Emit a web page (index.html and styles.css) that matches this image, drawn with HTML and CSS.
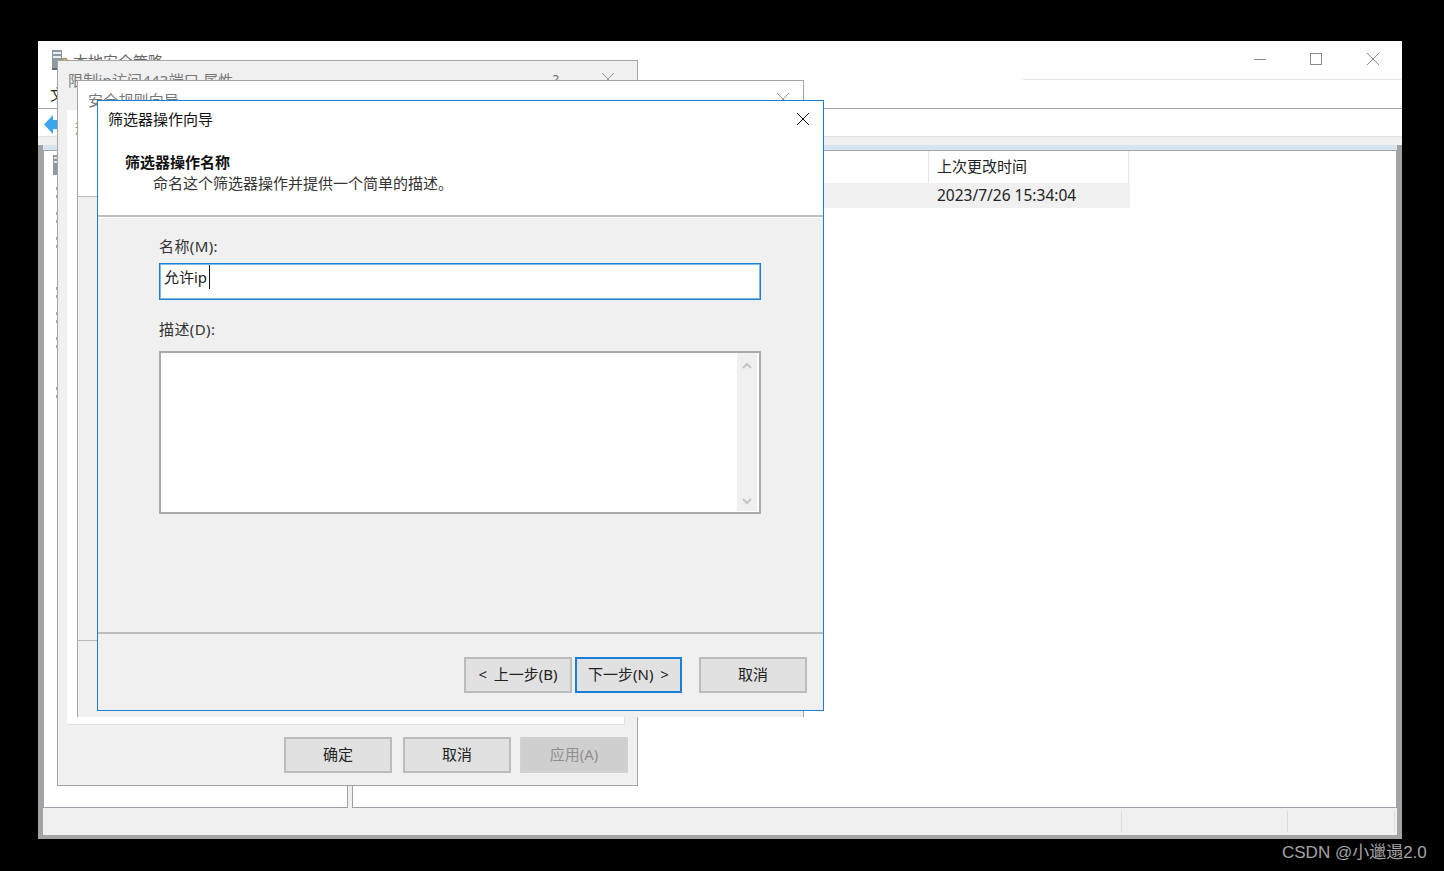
FILE: index.html
```html
<!doctype html>
<html lang="zh-CN">
  <head>
    <meta charset="UTF-8" />
    <meta name="viewport" content="width=device-width, initial-scale=1.0" />
    <title>筛选器操作向导</title>
    <link rel="stylesheet" href="styles.css">
  </head>
  <body>
    <div class="desktop">
      <!-- 主窗口 -->
      <div class="window main-window">
        <div class="title-bar">
          <svg class="app-icon" width="18" height="20" viewBox="0 0 18 20">
            <rect x="1" y="0" width="10" height="18" fill="#8d99a3" />
            <rect x="2" y="2" width="8" height="2" fill="#e8edf0" />
            <rect x="2" y="6" width="8" height="2" fill="#e8edf0" />
            <rect x="1" y="18" width="10" height="2" fill="#5f6a73" />
            <path d="M11 14v-3a2.500 2.500 0 0 1 5 0v3" fill="none" stroke="#b08a3a" stroke-width="1.500" />
            <rect x="10" y="14" width="7" height="5" fill="#d9a93f" />
          </svg>
          <span class="app-name">本地安全策略</span>
          <div class="window-controls">
            <svg class="min-icon" width="12" height="12" viewBox="0 0 12 12"><path d="M0 6.500h12" stroke="#8a8a8a" /></svg>
            <svg width="12" height="12" viewBox="0 0 12 12"><rect x="0.500" y="0.500" width="11" height="11" fill="none" stroke="#8a8a8a" /></svg>
            <svg width="12" height="12" viewBox="0 0 12 12"><path d="M0 0l12 12M12 0L0 12" stroke="#8a8a8a" /></svg>
          </div>
        </div>
        <div class="title-rule"></div>
        <div class="menu-bar">文件(F)</div>
        <div class="tool-bar">
          <svg width="15" height="19" viewBox="0 0 15 19">
            <path d="M0 9.500L9 0v5h6v9H9v5z" fill="#3ba6f0" />
          </svg>
        </div>
        <div class="strip"></div>
        <div class="workspace">
          <div class="blue-strip"></div>
          <div class="panes">
            <div class="pane tree-pane">
              <svg class="tree-icon" width="14" height="21" viewBox="0 0 14 21">
                <rect x="0" y="0" width="13" height="20" fill="#8d99a3" />
                <rect x="1" y="2" width="11" height="2" fill="#dfe5e9" />
                <rect x="1" y="6" width="11" height="2" fill="#dfe5e9" />
              </svg>
              <div class="tree-row"><i></i></div>
              <div class="tree-row"><i></i></div>
              <div class="tree-row"><i></i></div>
              <div class="tree-row"></div>
              <div class="tree-row"><i></i></div>
              <div class="tree-row"><i></i></div>
              <div class="tree-row"><i></i></div>
              <div class="tree-row"></div>
              <div class="tree-row"><i></i></div>
            </div>
            <div class="pane list-pane">
              <div class="list-head">
                <div class="col-name"></div>
                <div class="col-time">上次更改时间</div>
              </div>
              <div class="list-row">
                <div class="col-name"></div>
                <div class="col-time">2023/7/26 15:34:04</div>
              </div>
            </div>
          </div>
          <div class="status-bar">
            <div class="status-cell status-wide"></div>
            <div class="status-cell status-mid"></div>
            <div class="status-cell status-end"></div>
          </div>
        </div>
      </div>

      <!-- 属性对话框 -->
      <div class="window dialog-props">
        <div class="dialog-title">
          <span>限制ip访问443端口 属性</span>
          <span class="help-mark">?</span>
          <svg class="dim-close" width="12" height="12" viewBox="0 0 12 12"><path d="M0 0l12 12M12 0L0 12" stroke="#999" /></svg>
        </div>
        <div class="tab-panel">
          <span class="tab-text">规则</span>
        </div>
        <div class="button-row props-buttons">
          <button class="btn btn-ok">确定</button>
          <button class="btn">取消</button>
          <button class="btn btn-disabled">应用(A)</button>
        </div>
      </div>

      <!-- 安全规则向导 -->
      <div class="window dialog-rule">
        <div class="rule-head">
          <div class="dialog-title">
            <span>安全规则向导</span>
            <svg class="dim-close" width="12" height="12" viewBox="0 0 12 12"><path d="M0 0l12 12M12 0L0 12" stroke="#999" /></svg>
          </div>
        </div>
        <div class="rule-body"></div>
        <div class="rule-foot"></div>
      </div>

      <!-- 筛选器操作向导 -->
      <div class="window dialog-wizard">
        <div class="wizard-head">
          <div class="wizard-title">
            <span>筛选器操作向导</span>
            <svg width="12" height="12" viewBox="0 0 12 12"><path d="M0 0l12 12M12 0L0 12" stroke="#111" /></svg>
          </div>
          <div class="wizard-heading">筛选器操作名称</div>
          <div class="wizard-sub">命名这个筛选器操作并提供一个简单的描述。</div>
        </div>
        <div class="wizard-body">
          <div class="field-label">名称(M):</div>
          <div class="text-input"><span class="typed">允许ip</span></div>
          <div class="field-label label-desc">描述(D):</div>
          <div class="text-area">
            <div class="scroll-track">
              <svg width="10" height="7" viewBox="0 0 10 7"><path d="M1 6l4-4 4 4" fill="none" stroke="#c4c4c4" stroke-width="2" /></svg>
              <svg width="10" height="7" viewBox="0 0 10 7"><path d="M1 1l4 4 4-4" fill="none" stroke="#c4c4c4" stroke-width="2" /></svg>
            </div>
          </div>
        </div>
        <div class="button-row wizard-buttons">
          <button class="btn btn-step">&lt; 上一步(B)</button>
          <button class="btn btn-step btn-default">下一步(N) &gt;</button>
          <button class="btn btn-cancel">取消</button>
        </div>
      </div>

      <div class="watermark">CSDN @小邋遢2.0</div>
    </div>
  </body>
</html>
```

FILE: styles.css
```css
* {
  box-sizing: border-box;
}
html,
body {
  margin: 0;
  height: 100%;
  background: #000;
}
body {
  font-family: 'Noto Sans', 'Noto Sans CJK SC', sans-serif;
  font-size: 15px;
  color: #222;
  overflow: hidden;
}
.desktop {
  position: relative;
  width: 1444px;
  height: 871px;
  overflow: hidden;
}
.window {
  position: absolute;
  display: flex;
  flex-direction: column;
  overflow: hidden;
}

/* 主窗口 */
.main-window {
  left: 38px;
  top: 41px;
  width: 1364px;
  height: 798px;
  background: #fff;
}
.title-bar {
  display: flex;
  align-items: center;
  height: 38px;
  padding-left: 13px;
  color: #666;
}
.app-icon {
  margin-right: 4px;
}
.window-controls {
  display: flex;
  gap: 45px;
  margin-left: auto;
  margin-right: 23px;
  margin-top: -3px;
}
.min-icon {
  margin-right: -1px;
  margin-left: 1px;
}
.title-rule {
  height: 1px;
  margin-left: 985px;
  background: #e5e5e5;
}
.menu-bar {
  height: 29px;
  padding: 3px 0 0 12px;
  border-bottom: 1px solid #a5a5a5;
}
.tool-bar {
  display: flex;
  align-items: center;
  height: 28px;
  padding: 3px 0 0 6px;
  border-bottom: 1px solid #e3e3e3;
}
.strip {
  height: 8px;
  background: #f0f0f0;
}
.workspace {
  flex: 1;
  display: flex;
  flex-direction: column;
  padding: 0 5px 4px 5px;
  background: #a3a3a3;
}
.blue-strip {
  height: 6px;
  background: #d9e4f1;
  border-bottom: 1px solid #a5a5a5;
}
.panes {
  flex: 1;
  display: flex;
  gap: 4px;
  background: #f0f0f0;
  min-height: 0;
}
.pane {
  background: #fff;
  border-bottom: 1px solid #a0a0a8;
}
.tree-pane {
  width: 305px;
  padding: 4px 0 0 9px;
  border-left: 1px solid #a0a0a8;
  border-right: 1px solid #a0a0a8;
}
.tree-icon {
  display: block;
  margin-bottom: 11px;
}
.tree-row {
  height: 25px;
}
.tree-row i {
  display: block;
  width: 3px;
  height: 11px;
  margin-left: 3px;
  border-top: 3px solid #aaa;
  border-bottom: 3px solid #aaa;
}
.list-pane {
  flex: 1;
  border-left: 1px solid #a0a0a8;
  border-right: 1px solid #a0a0a8;
}
.list-head,
.list-row {
  display: flex;
}
.list-head {
  height: 32px;
}
.list-row {
  height: 25px;
  width: 777px;
  padding-bottom: 2px;
  background: #f0f0f0;
  align-items: center;
  font-size: 15.500px;
}
.col-name {
  width: 575px;
}
.col-time {
  flex: 1;
  padding-left: 9px;
}
.list-head .col-name {
  width: 576px;
  border-right: 1px solid #e5e5e5;
}
.list-head .col-time {
  flex: none;
  width: 200px;
  padding-left: 8px;
  line-height: 30px;
  border-right: 1px solid #e5e5e5;
}
.status-bar {
  display: flex;
  height: 27px;
  padding-bottom: 1px;
  background: #f0f0f0;
}
.status-cell {
  margin: 3px 0 2px;
  border-right: 1px solid #dcdcdc;
}
.status-wide {
  width: 1079px;
}
.status-mid {
  width: 166px;
}
.status-end {
  width: 107px;
}

/* 对话框 */
.dialog-title {
  display: flex;
  align-items: center;
  height: 36px;
  padding-left: 10px;
  color: #777;
  letter-spacing: 0.2px;
}
.help-mark {
  margin-left: auto;
  margin-right: 43px;
  font-size: 14px;
}
.dim-close {
  margin-left: auto;
  margin-right: 14px;
}
.help-mark + .dim-close {
  margin-left: 0;
  margin-right: 23px;
}
.dialog-props {
  left: 57px;
  top: 60px;
  width: 581px;
  height: 726px;
  background: #f0f0f0;
  border: 1px solid #a5a5a5;
}
.dialog-props .dialog-title {
  margin-bottom: 13px;
}
.tab-panel {
  flex: 1;
  margin: 0 12px 0 9px;
  padding: 6px 0 0 8px;
  background: #fff;
  border-right: 1px solid #e0e0e0;
  border-bottom: 1px solid #e0e0e0;
  color: #a08050;
}
.tab-text {
  white-space: nowrap;
}
.props-buttons {
  height: 60px;
  padding: 12px 9px 0 0;
  gap: 9px;
}
.btn-ok {
  margin-right: 2px;
}
.dialog-rule {
  left: 77px;
  top: 80px;
  width: 727px;
  height: 637px;
  background: #f0f0f0;
  border: 1px solid #a5a5a5;
  border-bottom: none;
}
.rule-head {
  height: 116px;
  background: #fff;
  border-bottom: 1px solid #bbb;
}
.rule-body {
  flex: 1;
}
.rule-foot {
  height: 77px;
  border-top: 1px solid #bbb;
}
.dialog-wizard {
  left: 97px;
  top: 100px;
  width: 727px;
  height: 611px;
  background: #f0f0f0;
  border: 1px solid #1a7fd6;
}
.wizard-head {
  height: 116px;
  background: #fff;
  border-bottom: 2px solid #bdbdbd;
  box-shadow: 0 1px 0 #fff;
  color: #111;
}
.wizard-title {
  display: flex;
  align-items: center;
  justify-content: space-between;
  height: 36px;
  padding: 0 14px 0 10px;
}
.wizard-title span {
  margin-top: -2px;
}
.wizard-heading {
  margin: 14px 0 0 27px;
  line-height: 22px;
  font-weight: 700;
}
.wizard-sub {
  margin-top: -1px;
  margin-left: 55px;
  line-height: 22px;
  color: #333;
}
.wizard-body {
  flex: 1;
  padding: 20px 0 0 61px;
}
.field-label {
  height: 20px;
  line-height: 19px;
  margin-bottom: 6px;
  color: #333;
  letter-spacing: 0.4px;
}
.label-desc {
  margin-top: 20px;
  margin-bottom: 11px;
}
.text-input {
  width: 602px;
  height: 37px;
  padding-left: 4px;
  line-height: 26px;
  background: #fff;
  border: 1px solid #1a7fd6;
  box-shadow: inset 0 0 0 1px #7db8e8;
}
.typed {
  display: inline-block;
  padding-right: 2px;
  line-height: 24px;
  border-right: 1px solid #111;
}
.text-area {
  display: flex;
  justify-content: flex-end;
  width: 602px;
  height: 163px;
  padding: 0 2px 1px 0;
  background: #fff;
  border: 2px solid #aaa;
}
.scroll-track {
  display: flex;
  flex-direction: column;
  justify-content: space-between;
  align-items: center;
  width: 20px;
  padding: 9px 0 6px;
  background: #f0f0f0;
}
.button-row {
  display: flex;
  justify-content: flex-end;
}
.wizard-buttons {
  height: 78px;
  padding: 23px 16px 0 0;
  gap: 3px;
  border-top: 2px solid #bdbdbd;
}
.btn {
  width: 108px;
  height: 36px;
  padding: 0 0 3px;
  font: inherit;
  color: #222;
  background: #e1e1e1;
  border: 2px solid #bcbcbc;
}
.btn-step {
  word-spacing: 3px;
}
.btn-default {
  width: 107px;
  border-color: #1a7fd6;
}
.btn-cancel {
  margin-left: 14px;
}
.btn-disabled {
  color: #8f8f8f;
  background: #cfcfcf;
  border-color: #d2d2d2;
}
.watermark {
  position: absolute;
  left: 1282px;
  top: 841px;
  font-family: 'Liberation Sans', 'Noto Sans CJK SC', sans-serif;
  font-size: 17px;
  line-height: 24px;
  color: #a5a5a5;
  white-space: nowrap;
}
```
